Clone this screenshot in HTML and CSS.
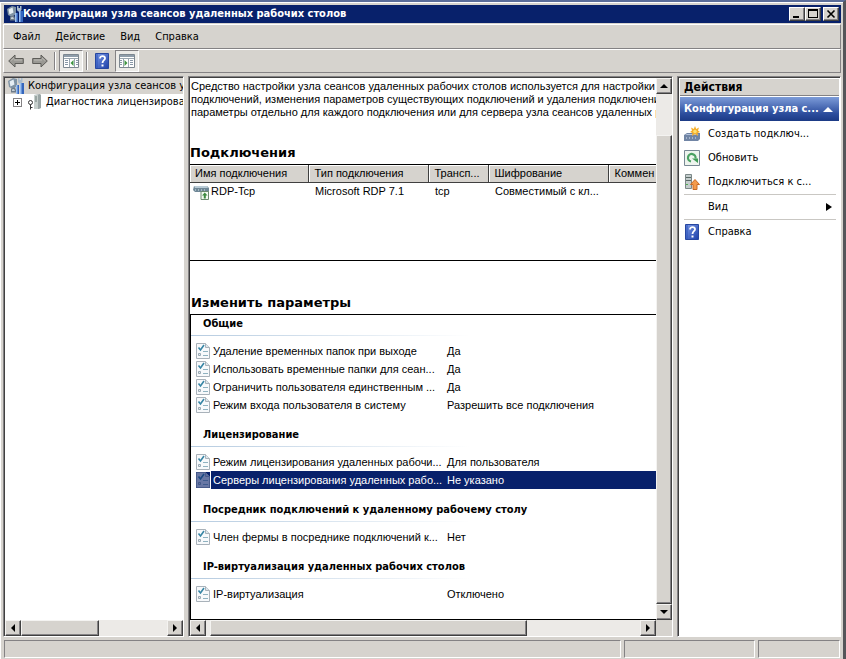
FILE: index.html
```
<!DOCTYPE html>
<html lang="ru">
<head>
  <meta charset="utf-8">
  <title>Конфигурация узла сеансов удаленных рабочих столов</title>
  <link rel="stylesheet" href="styles.css">
</head>
<body>
  <svg class="defs" width="0" height="0">
    <linearGradient id="blue" x1="0" y1="0" x2="1" y2="1">
      <stop offset="0" stop-color="#7c9be8"/>
      <stop offset="1" stop-color="#1c3fa8"/>
    </linearGradient>
    <symbol id="i-app" viewBox="0 0 16 16">
      <path d="M0 3l5-3 4 1v7l-4 3-4-2z" fill="#7f93a4"/>
      <path d="M1.500 3.500l4-2 1 5-4 2z" fill="#e6eef4"/>
      <path d="M3 10.500l4-1 2 5H3z" fill="#6d7b88"/>
      <path d="M4 11.500l2-.5 1 2H4z" fill="#c6d0d8"/>
      <path d="M10 0h1.500v2H13V0h1.500v4L13 5.500h-2L10 4z" fill="#a9bccd"/>
      <path d="M8 7h3v9H8zM12 5h4v11h-3z" fill="#3566bd"/>
      <path d="M8 7h1.500v9H8zM12 5h1.500v11H12z" fill="#9cc0f0"/>
    </symbol>
    <symbol id="i-lic" viewBox="0 0 16 16">
      <path d="M7 1l6-1 1 1v13l-2 1H7z" fill="#9aa5a5"/>
      <path d="M7 1h4v14H7z" fill="#c6cfcc"/>
      <path d="M8 3h2M8 5h2M8 7h2" stroke="#6f7d7a"/>
      <circle cx="3.5" cy="8.5" r="2" fill="#fff" stroke="#333"/>
      <path d="M3.500 10.500v5M3.500 13.500h2" stroke="#333" fill="none"/>
    </symbol>
    <symbol id="i-left" viewBox="0 0 16 14">
      <path d="M.7 7L7 1v3.500h8.300v5H7V13z" fill="#9a9994" stroke="#5d5c58"/>
      <path d="M3 6.500L6 4M6 6h8" stroke="#bbb9b4" fill="none"/>
    </symbol>
    <symbol id="i-tree" viewBox="0 0 16 14">
      <path d="M.5.5h15v13H.5z" fill="#fff" stroke="#7d8790"/>
      <path d="M1 1h14v2H1z" fill="#8f9daa"/>
      <path d="M1 4.500h14M6.500 5v8M11.500 5v8" stroke="#9aa6b0"/>
      <path d="M2 6.500h3M2 8.500h3M2 10.500h3M13 6.500h2M13 8.500h2M13 10.500h2" stroke="#8897a6"/>
      <path d="M10.500 6v6L7.500 9z" fill="#3e9440"/>
    </symbol>
    <symbol id="i-help" viewBox="0 0 14 16">
      <path d="M.5.5h13v15H.5z" fill="url(#blue)" stroke="#2747a0"/>
      <path d="M2 1v14" stroke="#2850b8"/>
      <path d="M5 5.500C5 2 10.500 2.500 10 5.500 9.800 7.300 7.500 7.300 7.500 10" fill="none" stroke="#fff" stroke-width="1.800"/>
      <path d="M6.500 11.500h2v2h-2z" fill="#fff"/>
    </symbol>
    <symbol id="i-rdp" viewBox="0 0 16 16">
      <path d="M1 2h13l2 2v4H2L0 6z" fill="#6f8796"/>
      <path d="M1 2h13l1 2H2z" fill="#b9cbd6"/>
      <path d="M2 6h1M5 6h1M8 6h1M11 6h1" stroke="#d8e8f0"/>
      <path d="M8 7.500h7.500v8H8z" fill="#f4faf2" stroke="#6e8b70"/>
      <path d="M11.800 8.500l2.700 3h-1.700v3h-2v-3H9z" fill="#3d8b40"/>
    </symbol>
    <symbol id="i-doc" viewBox="0 0 14 16">
      <path d="M.5.5h9l4 4v11H.5z" fill="#f7f9fb" stroke="#a9b2ba"/>
      <path d="M9.500.5v4h4" fill="#dde5ea" stroke="#a9b2ba"/>
      <path d="M2.500 4.500l2 2.500L8 2" fill="none" stroke="#3685a5" stroke-width="1.600"/>
      <path d="M7 8.500h5M7 12.500h5" stroke="#8fb2c0"/>
      <path d="M2.500 10.500h2v2h-2z" fill="#e5ecf0" stroke="#9aaab4"/>
    </symbol>
    <symbol id="i-new" viewBox="0 0 16 16">
      <path d="M0 9l3-2h13v6l-2 2H0z" fill="#7185a5"/>
      <path d="M1 9l2-1h12l-2 1z" fill="#b6c4dc"/>
      <path d="M2 12h1M5 12h1M8 12h1M11 12h1" stroke="#dce6f5"/>
      <path d="M11 0l1.200 3 2.800-1.500L14 4.500l2 1.500-2.500 1 .5 3-3-2-3 2 .5-3L6 6l2-1.500L7 1.500 9.800 3z" fill="#f6ae28"/>
      <circle cx="11" cy="5.500" r="1.800" fill="#ffdf70"/>
    </symbol>
    <symbol id="i-refresh" viewBox="0 0 16 16">
      <path d="M.5.5h15v15H.5z" fill="#eef4ee" stroke="#788894"/>
      <path d="M7 11.500A3.800 3.800 0 1 1 11.500 8.500" fill="none" stroke="#4ba263" stroke-width="2.200"/>
      <path d="M8 8.500h6v4.500z" fill="#3f9c56"/>
    </symbol>
    <symbol id="i-conn" viewBox="0 0 16 16">
      <path d="M1.500.5h6v14h-6z" fill="#c3cccc" stroke="#7c8888"/>
      <path d="M2 3.500h5M2 6.500h5" stroke="#5a6a66"/>
      <path d="M2 10.500h2" stroke="#4fae50"/>
      <path d="M11 5.500l4.500 5H13v5H9v-5H6.500z" fill="#f49b4c" stroke="#c86a26"/>
    </symbol>
  </svg>

  <div class="window">
    <header class="titlebar">
      <svg class="icon"><use href="#i-app"/></svg>
      <h1>Конфигурация узла сеансов удаленных рабочих столов</h1>
      <div class="controls">
        <button aria-label="Свернуть"><svg viewBox="0 0 10 10"><path d="M1 7h6v2H1z"/></svg></button>
        <button aria-label="Развернуть"><svg viewBox="0 0 10 10"><path d="M0 0h10v9H0zM1 2v6h8V2z" fill-rule="evenodd"/></svg></button>
        <button class="close" aria-label="Закрыть"><svg viewBox="0 0 10 10"><path d="M1.500 1.500l7 7M8.500 1.500l-7 7" stroke="#000" stroke-width="1.600"/></svg></button>
      </div>
    </header>

    <nav class="menubar">
      <button>Файл</button>
      <button>Действие</button>
      <button>Вид</button>
      <button>Справка</button>
    </nav>

    <div class="toolbar">
      <button aria-label="Назад"><svg class="arrow"><use href="#i-left"/></svg></button>
      <button aria-label="Вперед"><svg class="arrow flip"><use href="#i-left"/></svg></button>
      <span class="sep"></span>
      <button class="pressed" aria-label="Дерево консоли"><svg class="arrow"><use href="#i-tree"/></svg></button>
      <span class="sep"></span>
      <button aria-label="Справка"><svg class="help"><use href="#i-help"/></svg></button>
      <button class="pressed" aria-label="Панель действий"><svg class="arrow flip"><use href="#i-tree"/></svg></button>
    </div>

    <main class="panes">
      <section class="pane tree">
        <ul>
          <li class="root"><svg class="icon"><use href="#i-app"/></svg><span>Конфигурация узла сеансов у,</span></li>
          <li class="child"><button class="expander" aria-label="Развернуть"><svg viewBox="0 0 7 7"><path d="M3 1h1v2h2v1H4v2H3V4H1V3h2z"/></svg></button><svg class="icon"><use href="#i-lic"/></svg><span>Диагностика лицензирова</span></li>
        </ul>
        <div class="hscroll">
          <button aria-label="Влево"><i class="tri left"></i></button>
          <span class="thumb"></span>
          <button aria-label="Вправо"><i class="tri right"></i></button>
        </div>
      </section>

      <section class="pane center">
        <div class="content">
          <p class="about">Средство настройки узла сеансов удаленных рабочих столов используется для настройки<br>подключений, изменения параметров существующих подключений и удаления подключени<br>параметры отдельно для каждого подключения или для сервера узла сеансов удаленных р</p>
          <h2>Подключения</h2>
          <div class="connections">
            <table>
              <colgroup><col class="c-name"><col class="c-type"><col class="c-transport"><col class="c-crypt"><col></colgroup>
              <thead>
                <tr><th>Имя подключения</th><th>Тип подключения</th><th>Трансп...</th><th>Шифрование</th><th>Коммен</th></tr>
              </thead>
              <tbody>
                <tr><td><svg class="icon"><use href="#i-rdp"/></svg>RDP-Tcp</td><td>Microsoft RDP 7.1</td><td>tcp</td><td>Совместимый с кл...</td><td></td></tr>
              </tbody>
            </table>
          </div>
          <h2>Изменить параметры</h2>
          <div class="settings">
            <h3>Общие</h3>
            <table>
              <tr><td><svg><use href="#i-doc"/></svg></td><td>Удаление временных папок при выходе</td><td>Да</td></tr>
              <tr><td><svg><use href="#i-doc"/></svg></td><td>Использовать временные папки для сеан...</td><td>Да</td></tr>
              <tr><td><svg><use href="#i-doc"/></svg></td><td>Ограничить пользователя единственным ...</td><td>Да</td></tr>
              <tr><td><svg><use href="#i-doc"/></svg></td><td>Режим входа пользователя в систему</td><td>Разрешить все подключения</td></tr>
            </table>
            <h3>Лицензирование</h3>
            <table>
              <tr><td><svg><use href="#i-doc"/></svg></td><td>Режим лицензирования удаленных рабочи...</td><td>Для пользователя</td></tr>
              <tr class="selected"><td><svg><use href="#i-doc"/></svg></td><td>Серверы лицензирования удаленных рабо...</td><td>Не указано</td></tr>
            </table>
            <h3>Посредник подключений к удаленному рабочему столу</h3>
            <table>
              <tr><td><svg><use href="#i-doc"/></svg></td><td>Член фермы в посреднике подключений к...</td><td>Нет</td></tr>
            </table>
            <h3>IP-виртуализация удаленных рабочих столов</h3>
            <table>
              <tr><td><svg><use href="#i-doc"/></svg></td><td>IP-виртуализация</td><td>Отключено</td></tr>
            </table>
          </div>
        </div>
        <div class="vscroll">
          <button aria-label="Вверх"><i class="tri up"></i></button>
          <span class="thumb"></span>
          <button aria-label="Вниз"><i class="tri down"></i></button>
        </div>
        <div class="hscroll">
          <button aria-label="Влево"><i class="tri left"></i></button>
          <span class="thumb"></span>
          <button aria-label="Вправо"><i class="tri right"></i></button>
        </div>
      </section>

      <aside class="pane actions">
        <h2>Действия</h2>
        <button class="group"><span>Конфигурация узла с...</span><i class="tri up"></i></button>
        <button class="action"><svg class="icon"><use href="#i-new"/></svg>Создать подключ...</button>
        <button class="action"><svg class="icon"><use href="#i-refresh"/></svg>Обновить</button>
        <button class="action"><svg class="icon"><use href="#i-conn"/></svg>Подключиться к с...</button>
        <hr>
        <button class="action"><span class="icon"></span>Вид<i class="tri right"></i></button>
        <hr>
        <button class="action"><svg class="icon"><use href="#i-help"/></svg>Справка</button>
      </aside>
    </main>

    <footer class="statusbar">
      <span></span>
      <span></span>
      <span></span>
    </footer>
  </div>
</body>
</html>
```
FILE: styles.css
```
* {
  box-sizing: border-box;
}

body {
  margin: 0;
  background: #d6d3ce;
  color: #000;
  font-family: "DejaVu Sans Condensed", "DejaVu Sans", sans-serif;
  font-size: 11px;
  line-height: 16px;
}

h1, h2, h3, p, ul {
  margin: 0;
  padding: 0;
}

button {
  margin: 0;
  padding: 0;
  border: none;
  background: none;
  color: inherit;
  font: inherit;
}

svg {
  display: block;
  flex: none;
}

.defs {
  position: absolute;
}

.icon {
  width: 16px;
  height: 16px;
  flex: none;
}

.window {
  display: flex;
  flex-direction: column;
  height: 100vh;
  padding: 3px 2px 0 3px;
  border-top: 2px solid #5b6d99;
  border-right: 3px solid #55565a;
  box-shadow: inset 1px 1px #fff;
}

/* title bar */
.titlebar {
  display: flex;
  align-items: center;
  height: 18px;
  margin-left: 1px;
  padding: 0 2px 0 3px;
  background: #08216b;
  color: #fff;
}

.titlebar h1 {
  flex: 1;
  font-size: 11px;
  white-space: nowrap;
}

.controls {
  display: flex;
}

.controls button {
  display: flex;
  align-items: center;
  justify-content: center;
  width: 16px;
  height: 14px;
  background: #d6d3ce;
  border: 1px solid;
  border-color: #fff #404040 #404040 #fff;
  box-shadow: inset -1px -1px #848284;
}

.controls .close {
  margin-left: 2px;
}

.controls svg {
  width: 10px;
  height: 10px;
}

/* menu and toolbar */
.menubar,
.toolbar {
  display: flex;
  align-items: center;
  height: 24px;
  border: 1px solid;
  border-color: #fff #848284 #848284 #fff;
}

.menubar {
  gap: 15px;
  height: 25px;
  margin-top: 1px;
  padding-left: 9px;
}

.toolbar {
  gap: 2px;
  padding-left: 1px;
}

.toolbar button {
  display: flex;
  align-items: center;
  justify-content: center;
  width: 22px;
  height: 22px;
}

.toolbar .pressed {
  width: 24px;
  background: #ecebe8;
  border: 1px solid;
  border-color: #848284 #fff #fff #848284;
}

.sep {
  width: 2px;
  height: 18px;
  margin: 0 1px;
  border-left: 1px solid #848284;
  border-right: 1px solid #fff;
}

.arrow {
  width: 16px;
  height: 14px;
}

.help {
  width: 14px;
  height: 16px;
}

.flip {
  transform: scaleX(-1);
}

/* panes */
.panes {
  display: grid;
  grid-template-columns: 181px minmax(0, 1fr) 164px;
  gap: 4px;
  flex: 1;
  min-height: 0;
  padding-top: 3px;
}

.pane {
  min-width: 0;
  min-height: 0;
  background: #fff;
  border: 1px solid;
  border-color: #848284 #fff #fff #848284;
  box-shadow: inset 1px 1px #404040;
  padding: 2px 1px 0 2px;
  overflow: hidden;
}

.tree {
  display: flex;
  flex-direction: column;
  padding: 1px 0 0 1px;
}

.tree ul {
  flex: 1;
  list-style: none;
}

.tree li {
  display: flex;
  align-items: center;
  height: 16px;
  overflow: hidden;
  white-space: nowrap;
}

.tree .root {
  gap: 4px;
  padding-left: 3px;
  background: #d6d3ce;
}

.tree .child {
  gap: 3px;
  padding-left: 8px;
}

.expander {
  flex: none;
  width: 9px;
  height: 9px;
  margin-right: 2px;
  border: 1px solid #848284;
}

/* scroll bars */
.hscroll,
.vscroll {
  display: grid;
  background: #eceae7;
}

.hscroll {
  grid-template-columns: 16px 78px 1fr 16px;
  height: 16px;
}

.vscroll {
  grid-template-rows: 16px 41px 1fr 16px;
  width: 16px;
}

.hscroll button,
.vscroll button,
.thumb {
  display: flex;
  align-items: center;
  justify-content: center;
  background: #d6d3ce;
  border: 1px solid;
  border-color: #f4f3f1 #404040 #404040 #f4f3f1;
  box-shadow: inset -1px -1px #848284;
}

.hscroll button:last-child {
  grid-column: 4;
}

.vscroll .thumb {
  grid-row: 3;
}

.vscroll button:last-child {
  grid-row: 4;
}

.tri {
  border: 4px solid transparent;
}

.tri.left {
  border-right-color: #000;
  border-left: none;
}

.tri.right {
  border-left-color: #000;
  border-right: none;
}

.tri.up {
  border-bottom-color: #000;
  border-top: none;
}

.tri.down {
  border-top-color: #000;
  border-bottom: none;
}

/* center pane */
.center {
  display: grid;
  grid-template-columns: minmax(0, 1fr) 16px;
  grid-template-rows: minmax(0, 1fr) 16px;
  padding: 1px 0 0 1px;
  background: #d6d3ce;
  font-family: "Liberation Sans", Arial, sans-serif;
}

.center .hscroll {
  grid-template-columns: 20px 68% 1fr 16px;
}

.center .hscroll button:first-child {
  width: 16px;
}

.content {
  display: flex;
  flex-direction: column;
  overflow: hidden;
  background: #fff;
  white-space: nowrap;
}

.about {
  height: 67px;
  padding: 2px 0 0 1px;
  line-height: 13px;
}

.content h2 {
  height: 19px;
  font-family: "DejaVu Sans", sans-serif;
  font-size: 13px;
  line-height: 16px;
}

.content table {
  width: 100%;
  table-layout: fixed;
  border-collapse: collapse;
}

.connections {
  height: 97px;
  border-top: 1px solid #000;
  border-bottom: 1px solid #000;
}

.c-name {
  width: 118px;
}

.c-type,
.c-crypt {
  width: 120px;
}

.c-transport {
  width: 60px;
}

.connections th {
  height: 17px;
  padding: 0 0 0 6px;
  background: #d6d3ce;
  border-right: 1px solid #404040;
  border-bottom: 1px solid #404040;
  box-shadow: inset 1px 1px #fff;
  font-weight: normal;
  text-align: left;
}

.connections th:first-child {
  padding-left: 5px;
}

.connections th:last-child {
  border-right: none;
}

.connections td {
  height: 18px;
  padding: 0 0 0 7px;
}

.connections td:first-child {
  padding-left: 3px;
}

.connections td .icon {
  display: inline-block;
  margin-right: 2px;
  vertical-align: middle;
}

.connections + h2 {
  margin-top: 34px;
  padding-left: 1px;
}

.settings {
  flex: 1;
  border: 1px solid #000;
  border-right: none;
}

.settings h3 {
  height: 21px;
  padding-left: 12px;
  border-bottom: 1px solid;
  border-image: linear-gradient(to right, #b5cbe0, #fff 60%) 1;
  font-family: "DejaVu Sans Condensed", "DejaVu Sans", sans-serif;
  font-size: 11px;
  line-height: 18px;
}

.settings table {
  margin: 6px 0 12px;
}

.settings td {
  height: 18px;
  padding: 0 0 0 2px;
  line-height: 18px;
}

.settings td:nth-child(1) {
  width: 20px;
  padding-left: 5px;
}

.settings td:nth-child(2) {
  width: 234px;
}

.settings td svg {
  width: 14px;
  height: 16px;
}

.selected td:nth-child(n+2) {
  background: #08216b;
  color: #fff;
}

.selected svg {
  background: #08216b;
}

.selected use {
  opacity: 0.4;
}

/* actions pane */
.actions {
  display: flex;
  flex-direction: column;
}

.actions h2 {
  height: 17px;
  padding-left: 4px;
  background: #d6d3ce;
  border-bottom: 1px solid #848284;
  font-size: 12px;
  line-height: 16px;
}

.group {
  display: flex;
  align-items: center;
  justify-content: space-between;
  height: 24px;
  margin: 1px 0;
  padding: 0 6px 0 4px;
  background: linear-gradient(#7d9cd9, #2c4d9d 70%, #1c3a85);
  color: #fff;
  font-weight: bold;
  white-space: nowrap;
}

.group .tri.up {
  border-width: 5px;
  border-top: none;
  border-bottom-color: #fff;
}

.action {
  display: flex;
  align-items: center;
  gap: 8px;
  height: 24px;
  padding: 0 7px 0 4px;
  white-space: nowrap;
}

.action .tri {
  margin-left: auto;
  border-width: 4px;
  border-left-width: 6px;
}

.actions hr {
  width: 152px;
  height: 1px;
  margin: 0 4px;
  border: none;
  background: #c9c7c3;
}

/* status bar */
.statusbar {
  display: grid;
  grid-template-columns: 1fr 131px 82px;
  gap: 3px;
  height: 18px;
  margin: 3px 1px 1px;
}

.statusbar span {
  border: 1px solid;
  border-color: #848284 #fff #fff #848284;
}
```
